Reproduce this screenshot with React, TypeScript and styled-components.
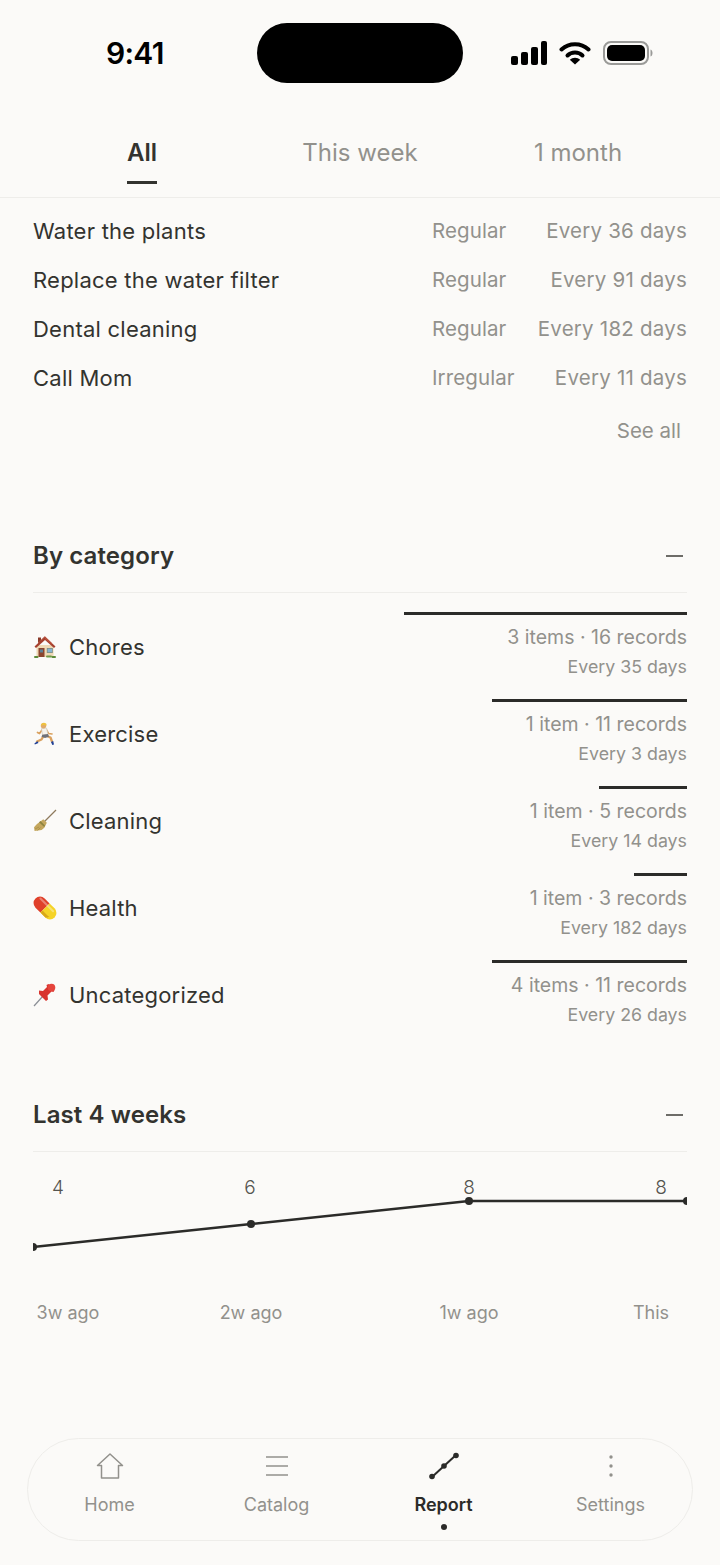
import React from 'react';
import styled, { createGlobalStyle } from 'styled-components';

const tasks = [
  { name: 'Water the plants', kind: 'Regular', every: 'Every 36 days' },
  { name: 'Replace the water filter', kind: 'Regular', every: 'Every 91 days' },
  { name: 'Dental cleaning', kind: 'Regular', every: 'Every 182 days' },
  { name: 'Call Mom', kind: 'Irregular', every: 'Every 11 days' },
];

const HouseEmoji = () => (
  <svg width="24" height="24" viewBox="0 0 24 24">
    <rect x="3.500" y="10" width="17" height="12" fill="#efd9b6" />
    <rect x="5" y="2.500" width="3" height="5" fill="#8a3a2a" />
    <path d="M12 1.500 1.500 11.500 3 13 12 5l9 8 1.500-1.500z" fill="#a5402f" />
    <path d="M12 1.500 5 8.200v-1L12 1zM12 1.500l7 6.700v1.500L12 4z" fill="#b9503a" />
    <rect x="5.500" y="13" width="6" height="9" fill="#8b452e" />
    <rect x="7" y="14.500" width="3" height="3" fill="#5c7f96" />
    <rect x="13.800" y="13" width="6" height="5" fill="#7f8f84" />
    <rect x="14.600" y="13.800" width="4.400" height="3.400" fill="#86b4d2" />
    <rect x="1" y="21" width="4.500" height="2" rx="1" fill="#5c8a3a" />
    <rect x="18.500" y="21" width="4.500" height="2" rx="1" fill="#5c8a3a" />
    <rect x="13" y="20.500" width="6" height="2" rx="1" fill="#6f9a48" />
  </svg>
);

const RunnerEmoji = () => (
  <svg width="24" height="24" viewBox="0 0 24 24">
    <path d="M9 8 6.500 11.500 4.500 10.500M13.500 8l2 3.500 3.500.5" stroke="#d9a05e" strokeWidth="1.700" strokeLinecap="round" strokeLinejoin="round" fill="none" />
    <path d="M10.500 14 8.500 17.500 4 19.500M14 14l3.500 1.500 1.500 4" stroke="#d9a05e" strokeWidth="2.300" strokeLinecap="round" strokeLinejoin="round" fill="none" />
    <path d="M8.500 6.500l5-.5 1.500 6.500-5.500.5z" fill="#f6f3ec" stroke="#cfc9bd" strokeWidth=".7" />
    <path d="M9.300 12.800l5.700-.7 1 2.600-4 1.300-3.500-1.300z" fill="#6f7178" />
    <circle cx="10.500" cy="3.800" r="2.700" fill="#e0ab6c" />
    <path d="M8 3.700C8 1 11 0 13 1.500c.8.700.6 1.800.3 2.300C12 2.700 10 2.900 8 3.700z" fill="#efc23e" />
    <path d="M1.500 21.200l3-1.900 1 1.600-3.700 1.700zM18 20l2.200-1 .8 3.600-1.700.3z" fill="#1f3f96" />
  </svg>
);

const BroomEmoji = () => (
  <svg width="24" height="24" viewBox="0 0 24 24">
    <path d="M23 1 11 13" stroke="#8d7a5c" strokeWidth="1.300" />
    <path d="M10.300 10.300l3.500 3.500-2.500 5-2.700 2.300-7 1-.6-3.800 3-3.300z" fill="#c4a75e" />
    <path d="M7.500 12l4.500 4.500-.8 1.500-5.200-4.800z" fill="#8e8440" />
    <path d="M2 20l4-2M4.500 21.500l3-3" stroke="#a88d45" strokeWidth=".8" />
  </svg>
);

const PillEmoji = () => (
  <svg width="24" height="24" viewBox="0 0 24 24">
    <g transform="rotate(45 12 12)">
      <path d="M12 5.500H5a6.500 6.500 0 0 0 0 13h7z" fill="#e0402a" />
      <path d="M12 5.500h7a6.500 6.500 0 0 1 0 13h-7z" fill="#f5d327" />
      <path d="M12 15.500h7a3.500 3.500 0 0 0 2-.6 5 5 0 0 1-2 3.600h-7z" fill="#d8a818" />
      <rect x="1" y="7.500" width="20" height="2" rx="1" fill="#fff" opacity=".35" />
    </g>
  </svg>
);

const PinEmoji = () => (
  <svg width="24" height="24" viewBox="0 0 24 24">
    <path d="M1 23 10 13" stroke="#8b8f96" strokeWidth="1.200" />
    <path d="M6 11l7 7 2-1.500-.5-4 4-4 2 .5 1-2L15.500 1l-2 1 .5 2-4 4-4-.5z" fill="#d8342e" />
    <circle cx="18.500" cy="4.500" r="3.800" fill="#e5443c" />
  </svg>
);

const categories = [
  { icon: <HouseEmoji />, name: 'Chores', width: 283, counts: '3 items · 16 records', every: 'Every 35 days' },
  { icon: <RunnerEmoji />, name: 'Exercise', width: 195, counts: '1 item · 11 records', every: 'Every 3 days' },
  { icon: <BroomEmoji />, name: 'Cleaning', width: 88, counts: '1 item · 5 records', every: 'Every 14 days' },
  { icon: <PillEmoji />, name: 'Health', width: 53, counts: '1 item · 3 records', every: 'Every 182 days' },
  { icon: <PinEmoji />, name: 'Uncategorized', width: 195, counts: '4 items · 11 records', every: 'Every 26 days' },
];

const GlobalStyle = createGlobalStyle`
  html, body {
    margin: 0;
    padding: 0;
    background: #fbfaf8;
  }
  body {
    font-family: Inter, "Liberation Sans", sans-serif;
    color: #33332f;
  }
`;

const Page = styled.div`
  width: 720px;
  height: 1565px;
  display: flex;
  flex-direction: column;
  overflow: hidden;
  background: #fbfaf8;
`;

const StatusBar = styled.div`
  height: 60px;
  padding: 23px 67px 0 106px;
  display: flex;
  align-items: center;
  justify-content: space-between;
`;

const Time = styled.div`
  width: 151px;
  font-size: 30px;
  font-weight: 600;
  letter-spacing: -0.7px;
  color: #000;
`;

const Island = styled.div`
  width: 206px;
  height: 60px;
  border-radius: 30px;
  background: #000;
`;

const StatusIcons = styled.div`
  width: 143px;
  margin-left: 48px;
  display: flex;
  align-items: center;
  gap: 12px;
  margin-right: -1px;
`;

const Tabs = styled.div`
  margin-top: 47px;
  padding: 0 33px;
  height: 67px;
  display: grid;
  grid-template-columns: repeat(3, 1fr);
  border-bottom: 1.5px solid #eeedea;
`;

const Tab = styled.div<{ $active?: boolean }>`
  display: flex;
  flex-direction: column;
  align-items: center;
  font-size: 24px;
  line-height: 30px;
  padding-top: 8px;
  font-weight: ${p => (p.$active ? 600 : 400)};
  color: ${p => (p.$active ? '#33332f' : '#92918c')};
`;

const TabLabel = styled.span<{ $active?: boolean }>`
  display: inline-block;
  height: 43px;
  border-bottom: ${p => (p.$active ? '3px solid #33332f' : 'none')};
`;

const TaskList = styled.div`
  padding: 8px 33px 0;
`;

const TaskRow = styled.div`
  height: 49px;
  display: grid;
  grid-template-columns: 399px 1fr auto;
  align-items: center;
  font-size: 22px;
  letter-spacing: 0.24px;
`;

const TaskKind = styled.span`
  font-size: 20.500px;
  letter-spacing: 0.1px;
  color: #92918c;
`;

const TaskEvery = styled.span`
  font-size: 20.500px;
  letter-spacing: 0.22px;
  color: #92918c;
  text-align: right;
`;

const SeeAll = styled.div`
  margin-top: 14px;
  padding-right: 6px;
  text-align: right;
  font-size: 20.500px;
  line-height: 30px;
  color: #92918c;
`;

const Section = styled.section<{ $top: number }>`
  margin-top: ${p => p.$top}px;
  padding: 0 33px;
`;

const SectionHead = styled.div`
  height: 59px;
  padding-bottom: 7px;
  display: flex;
  align-items: center;
  justify-content: space-between;
  border-bottom: 1.5px solid #eeedea;
`;

const SectionTitle = styled.h2`
  margin: 0;
  font-size: 24px;
  font-weight: 600;
  letter-spacing: 0.1px;
  color: #33332f;
`;

const Collapse = styled.span`
  width: 17px;
  height: 2px;
  margin-right: 4px;
  background: #6d6c68;
`;

const CategoryList = styled.div`
  padding-top: 19px;
`;

const CategoryRow = styled.div`
  height: 87px;
  display: flex;
  justify-content: space-between;
`;

const CategoryName = styled.div`
  height: 69px;
  display: flex;
  align-items: center;
  gap: 12px;
  font-size: 22px;
  letter-spacing: 0.2px;
`;

const CategoryStats = styled.div`
  display: flex;
  flex-direction: column;
  align-items: flex-end;
`;

const Bar = styled.div`
  height: 3px;
  background: #2b2b29;
`;

const Counts = styled.div`
  margin-top: 7px;
  font-size: 19.500px;
  line-height: 30px;
  color: #92918c;
`;

const CategoryEvery = styled.div`
  font-size: 17.800px;
  line-height: 30px;
  color: #92918c;
`;

const Chart = styled.svg`
  display: block;
`;

const ChartValue = styled.text`
  font-family: Inter, "Liberation Sans", sans-serif;
  font-size: 19px;
  font-weight: 300;
  fill: #55544f;
  text-anchor: middle;
`;

const ChartLabel = styled.text`
  font-family: Inter, "Liberation Sans", sans-serif;
  font-size: 18px;
  fill: #92918c;
  text-anchor: middle;
`;

const BottomNav = styled.nav`
  margin: auto 27px 24px;
  height: 103px;
  box-sizing: border-box;
  border: 1.5px solid #eeedea;
  border-radius: 52px;
  display: grid;
  grid-template-columns: repeat(4, 167px);
  justify-content: center;
`;

const NavItem = styled.div<{ $active?: boolean }>`
  position: relative;
  display: flex;
  flex-direction: column;
  align-items: center;
  padding-top: 13px;
  font-size: 18px;
  font-weight: ${p => (p.$active ? 600 : 400)};
  color: ${p => (p.$active ? '#2b2b29' : '#92918c')};
`;

const NavLabel = styled.span`
  margin-top: 13px;
  line-height: 24px;
`;

const NavDot = styled.span`
  position: absolute;
  bottom: 10px;
  width: 6px;
  height: 6px;
  border-radius: 50%;
  background: #2b2b29;
`;

const points: [number, number][] = [[0, 95], [218, 72], [436, 49], [654, 49]];

export default function App() {
  return (
    <Page>
      <GlobalStyle />
      <StatusBar>
        <Time>9:41</Time>
        <Island />
        <StatusIcons>
          <svg width="36" height="24" viewBox="0 0 36 24">
            <rect x="0" y="15" width="7" height="9" rx="2" fill="#000" />
            <rect x="10" y="11" width="7" height="13" rx="2" fill="#000" />
            <rect x="20" y="6" width="7" height="18" rx="2" fill="#000" />
            <rect x="30" y="0" width="6" height="24" rx="2" fill="#000" />
          </svg>
          <svg width="32" height="24" viewBox="0 0 32 24">
            <path d="M2.500 8.500C10 1.500 22 1.500 29.500 8.500" stroke="#000" strokeWidth="4" fill="none" strokeLinecap="round" />
            <path d="M8.500 14.500C12.500 10.500 19.500 10.500 23.500 14.500" stroke="#000" strokeWidth="4" fill="none" strokeLinecap="round" />
            <path d="M16 23.500 10.800 18.700C13.500 16 18.500 16 21.200 18.700z" fill="#000" />
          </svg>
          <svg width="50" height="24" viewBox="0 0 50 24">
            <rect x="1" y="1" width="44" height="22" rx="7" fill="none" stroke="#9a9a98" strokeWidth="2" />
            <rect x="4" y="4" width="38" height="16" rx="5" fill="#000" />
            <path d="M47.500 8.500c1.500.5 2 2 2 3.500s-.5 3-2 3.500z" fill="#9a9a98" />
          </svg>
        </StatusIcons>
      </StatusBar>

      <Tabs>
        <Tab $active><TabLabel $active>All</TabLabel></Tab>
        <Tab><TabLabel>This week</TabLabel></Tab>
        <Tab><TabLabel>1 month</TabLabel></Tab>
      </Tabs>

      <TaskList>
        {tasks.map(task => (
          <TaskRow key={task.name}>
            <span>{task.name}</span>
            <TaskKind>{task.kind}</TaskKind>
            <TaskEvery>{task.every}</TaskEvery>
          </TaskRow>
        ))}
        <SeeAll>See all</SeeAll>
      </TaskList>

      <Section $top={80}>
        <SectionHead>
          <SectionTitle>By category</SectionTitle>
          <Collapse />
        </SectionHead>
        <CategoryList>
          {categories.map(cat => (
            <CategoryRow key={cat.name}>
              <CategoryName>{cat.icon}{cat.name}</CategoryName>
              <CategoryStats>
                <Bar style={{ width: cat.width }} />
                <Counts>{cat.counts}</Counts>
                <CategoryEvery>{cat.every}</CategoryEvery>
              </CategoryStats>
            </CategoryRow>
          ))}
        </CategoryList>
      </Section>

      <Section $top={38}>
        <SectionHead>
          <SectionTitle>Last 4 weeks</SectionTitle>
          <Collapse />
        </SectionHead>
        <Chart width="654" height="180" viewBox="0 0 654 180">
          <polyline
            points={points.map(p => p.join(',')).join(' ')}
            fill="none"
            stroke="#2b2b29"
            strokeWidth="2.500"
          />
          {points.map(([x, y]) => <circle key={x} cx={x} cy={y} r="4" fill="#2b2b29" />)}
          <ChartValue x="25" y="42">4</ChartValue>
          <ChartValue x="217" y="42">6</ChartValue>
          <ChartValue x="436" y="42">8</ChartValue>
          <ChartValue x="628" y="42">8</ChartValue>
          <ChartLabel x="35" y="167">3w ago</ChartLabel>
          <ChartLabel x="218" y="167">2w ago</ChartLabel>
          <ChartLabel x="436" y="167">1w ago</ChartLabel>
          <ChartLabel x="618" y="167">This</ChartLabel>
        </Chart>
      </Section>

      <BottomNav>
        <NavItem>
          <svg width="28" height="28" viewBox="0 0 28 28" fill="none" stroke="#92918c" strokeWidth="1.500">
            <path d="M1.500 13.500 14 2l12.500 11.500h-4V26h-17V13.500z" strokeLinejoin="round" />
          </svg>
          <NavLabel>Home</NavLabel>
        </NavItem>
        <NavItem>
          <svg width="28" height="28" viewBox="0 0 28 28" fill="none" stroke="#92918c" strokeWidth="1.600">
            <path d="M3 5h22M3 14h22M3 23h22" />
          </svg>
          <NavLabel>Catalog</NavLabel>
        </NavItem>
        <NavItem $active>
          <svg width="32" height="28" viewBox="0 0 32 28">
            <path d="M4 25 16 14 28 3" stroke="#2b2b29" strokeWidth="2" fill="none" />
            <circle cx="4" cy="24.500" r="2.800" fill="#2b2b29" />
            <circle cx="16" cy="14" r="2.800" fill="#2b2b29" />
            <circle cx="28" cy="3.500" r="2.800" fill="#2b2b29" />
          </svg>
          <NavLabel>Report</NavLabel>
          <NavDot />
        </NavItem>
        <NavItem>
          <svg width="28" height="28" viewBox="0 0 28 28" fill="#92918c">
            <circle cx="14" cy="5" r="1.700" />
            <circle cx="14" cy="14" r="1.700" />
            <circle cx="14" cy="23" r="1.700" />
          </svg>
          <NavLabel>Settings</NavLabel>
        </NavItem>
      </BottomNav>
    </Page>
  );
}
